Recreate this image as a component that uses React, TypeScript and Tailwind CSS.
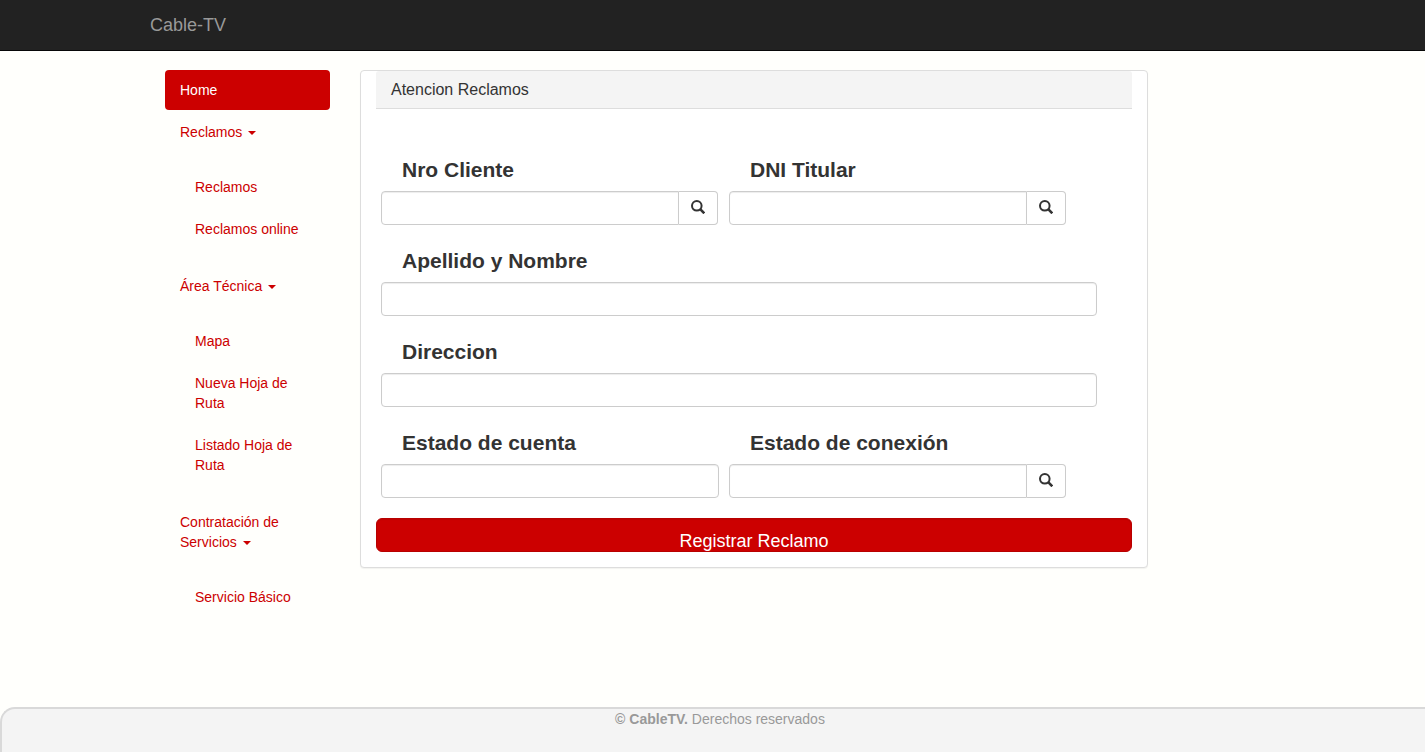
import React from "react";

type NavGroup = { title: string; items: string[] };

const groups: NavGroup[] = [
  { title: "Reclamos", items: ["Reclamos", "Reclamos online"] },
  { title: "Área Técnica", items: ["Mapa", "Nueva Hoja de Ruta", "Listado Hoja de Ruta"] },
  { title: "Contratación de Servicios", items: ["Servicio Básico"] },
];

function SearchIcon() {
  return (
    <svg viewBox="0 0 14 14" className="h-3.5 w-3.5" fill="none" stroke="currentColor" aria-hidden="true">
      <circle cx="5.8" cy="5.8" r="4.8" strokeWidth="2" />
      <path d="M9.2 9.2l4.1 4.1" strokeWidth="2.6" />
    </svg>
  );
}

function Caret() {
  return (
    <span className="ml-0.5 inline-block h-0 w-0 border-x-4 border-t-4 border-x-transparent border-t-current align-middle" />
  );
}

function NavLink({ children }: { children: React.ReactNode }) {
  return (
    <a href="#" className="block rounded px-[15px] py-2.5 text-[#cc0000]">
      {children}
    </a>
  );
}

function Field({ id, label, search }: { id: string; label: string; search?: boolean }) {
  return (
    <div>
      <label htmlFor={id} className="block px-[21px] pb-1.5 text-[21px] leading-[30px] font-bold">
        {label}
      </label>
      <div className="flex">
        <input
          id={id}
          type="text"
          className={
            search
              ? "h-[34px] min-w-0 flex-1 rounded-l border border-[#cccccc] bg-white px-3 shadow-[inset_0_1px_1px_rgba(0,0,0,0.075)]"
              : "h-[34px] min-w-0 flex-1 rounded border border-[#cccccc] bg-white px-3 shadow-[inset_0_1px_1px_rgba(0,0,0,0.075)]"
          }
        />
        {search && (
          <button
            type="button"
            aria-label={"Buscar " + label}
            className="flex h-[34px] w-[39px] items-center justify-center rounded-r border border-l-0 border-[#cccccc] bg-white pb-0.5"
          >
            <SearchIcon />
          </button>
        )}
      </div>
    </div>
  );
}

export default function App() {
  return (
    <div className="flex min-h-screen flex-col bg-[#fffffc] font-['Liberation_Sans',Arial,sans-serif] text-sm leading-5 text-[#333333]">
      <header className="border-b border-[#080808] bg-[#222222]">
        <div className="mx-auto flex h-[50px] max-w-[1125px] items-center">
          <a href="#" className="text-lg leading-5 text-[#999999]">
            Cable-TV
          </a>
        </div>
      </header>

      <div className="mx-auto flex w-full max-w-[1125px] flex-1 items-start pt-[19px]">
        <nav className="w-[195px] shrink-0 px-[15px]">
          <ul className="flex flex-col gap-0.5">
            <li>
              <a href="#" className="block rounded bg-[#cc0000] px-[15px] py-2.5 text-white">
                Home
              </a>
            </li>
            {groups.map((group) => (
              <li key={group.title}>
                <NavLink>
                  {group.title} <Caret />
                </NavLink>
                <ul className="flex flex-col gap-0.5 p-[15px]">
                  {group.items.map((item) => (
                    <li key={item}>
                      <NavLink>{item}</NavLink>
                    </li>
                  ))}
                </ul>
              </li>
            ))}
          </ul>
        </nav>

        <main className="max-w-[818px] flex-1 px-[15px]">
          <section className="rounded border border-[#dddddd] bg-white px-[15px] pb-[15px] shadow-[0_1px_1px_rgba(0,0,0,0.05)]">
            <h3 className="rounded-t-[3px] border-b border-[#dddddd] bg-[#f4f4f4] px-[15px] pt-2.5 pb-[9px] text-base leading-[18px]">
              Atencion Reclamos
            </h3>
            <form>
              <div className="flex flex-col gap-[21px] pt-[46px] pr-[35px] pb-5 pl-[5px]">
                <div className="grid grid-cols-2 gap-x-[11px] pr-[31px]">
                  <Field id="cliente" label="Nro Cliente" search />
                  <Field id="dni" label="DNI Titular" search />
                </div>
                <Field id="nombre" label="Apellido y Nombre" />
                <Field id="direccion" label="Direccion" />
                <div className="grid grid-cols-[338fr_337fr] gap-x-2.5 pr-[31px]">
                  <Field id="cuenta" label="Estado de cuenta" />
                  <Field id="conexion" label="Estado de conexión" search />
                </div>
              </div>
              <button
                type="button"
                className="block h-[34px] w-full rounded-md border border-[#b80000] bg-[#cc0000] pt-3 text-lg leading-5 text-white shadow-[inset_0_1px_1px_rgba(0,0,0,0.075)]"
              >
                Registrar Reclamo
              </button>
            </form>
          </section>
        </main>
      </div>

      <footer className="h-[45px] rounded-tl-[15px] border-t-2 border-l-2 border-[#d9d9d9] bg-[#f4f4f4] pl-[13px] text-center text-[#999999]">
        <strong>© CableTV.</strong> Derechos reservados
      </footer>
    </div>
  );
}
